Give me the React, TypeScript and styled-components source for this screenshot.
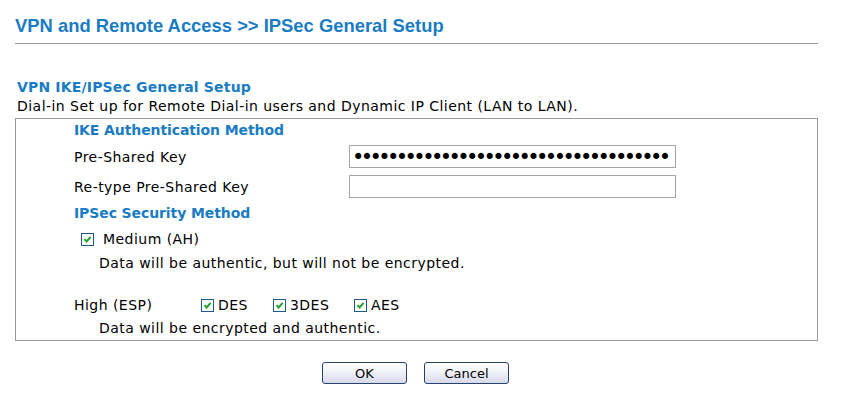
import React from "react";
import styled, { createGlobalStyle } from "styled-components";

const Global = createGlobalStyle`
  html, body { margin: 0; padding: 0; background: #ffffff; }
  body {
    font-family: "DejaVu Sans", Verdana, sans-serif;
    font-size: 14px;
    letter-spacing: 0.46px;
    color: #000;
  }
`;

const Page = styled.div`
  width: 855px;
  height: 411px;
  padding: 0 0 0 15px;
  box-sizing: border-box;
  overflow: hidden;
`;

const Title = styled.h1`
  margin: 0;
  padding-top: 16px;
  height: 27px;
  width: 803px;
  box-sizing: content-box;
  border-bottom: 1px solid #9a9a9a;
  font-family: "Liberation Sans", Arial, sans-serif;
  font-size: 18.4px;
  letter-spacing: 0;
  font-weight: bold;
  line-height: 20px;
  color: #1a7cc3;
`;

const SectionTitle = styled.div`
  margin-top: 34px;
  padding-left: 2px;
  height: 18px;
  line-height: 18px;
  font-weight: bold;
  letter-spacing: 0.17px;
  color: #1a7cc3;
`;

const Desc = styled.div`
  padding-left: 2px;
  height: 22px;
  line-height: 20px;
`;

const Box = styled.div`
  width: 743px;
  height: 221px;
  border: 1px solid #9a9a9a;
  display: flex;
  flex-direction: column;
  padding-left: 58px;
  box-sizing: content-box;
`;

const Row = styled.div<{ $h: number }>`
  height: ${(p) => p.$h}px;
  display: flex;
  align-items: center;
`;

const SubHeading = styled.div`
  font-weight: bold;
  letter-spacing: -0.1px;
  color: #1a7cc3;
`;

const Label = styled.div`
  width: 275px;
  flex: none;
`;

const TextInput = styled.input`
  width: 327px;
  height: 23px;
  box-sizing: border-box;
  border: 1px solid #a5a5a5;
  padding: 0 2px;
  margin: 0;
  font-family: "DejaVu Sans", sans-serif;
  font-size: 21px;
  letter-spacing: -3.62px;
  color: #000;
  background: #fff;
  outline: none;
`;

const Indented = styled.div<{ $pl: number }>`
  padding-left: ${(p) => p.$pl}px;
  display: flex;
  align-items: center;
`;

const CheckLabel = styled.label<{ $w?: number; $gap?: number }>`
  display: flex;
  align-items: center;
  width: ${(p) => (p.$w ? `${p.$w}px` : "auto")};
  flex: none;
  gap: ${(p) => p.$gap ?? 4}px;
`;

const CheckBoxBox = styled.span`
  width: 11px;
  height: 11px;
  border: 1px solid #1c5a8a;
  background: #fff;
  display: inline-flex;
  align-items: center;
  justify-content: center;
  flex: none;
`;

const HighLabel = styled.div`
  width: 127px;
  flex: none;
`;

const ButtonBar = styled.div`
  display: flex;
  gap: 17px;
  margin-top: 21px;
  padding-left: 307px;
`;

const Button = styled.button`
  width: 85px;
  height: 22px;
  border: 1px solid #27416d;
  border-radius: 3px;
  background: linear-gradient(#ffffff 0%, #f1f2f8 45%, #d6d9ea 100%);
  font-family: "DejaVu Sans", sans-serif;
  font-size: 13px;
  color: #000;
  padding: 0;
`;

function Check() {
  return (
    <CheckBoxBox>
      <svg width="9" height="9" viewBox="0 0 9 9">
        <path d="M1.5 4.2 L3.6 6.5 L7.6 1.8" stroke="#1fa02a" strokeWidth="2" fill="none" />
      </svg>
    </CheckBoxBox>
  );
}

export default function App() {
  return (
    <>
      <Global />
      <Page>
        <Title>VPN and Remote Access &gt;&gt; IPSec General Setup</Title>
        <SectionTitle>VPN IKE/IPSec General Setup</SectionTitle>
        <Desc>Dial-in Set up for Remote Dial-in users and Dynamic IP Client (LAN to LAN).</Desc>
        <Box>
          <Row $h={22}>
            <SubHeading>IKE Authentication Method</SubHeading>
          </Row>
          <Row $h={31}>
            <Label>Pre-Shared Key</Label>
            <TextInput type="password" readOnly defaultValue={"x".repeat(36)} />
          </Row>
          <Row $h={29}>
            <Label>Re-type Pre-Shared Key</Label>
            <TextInput type="password" readOnly defaultValue="" />
          </Row>
          <Row $h={24}>
            <SubHeading>IPSec Security Method</SubHeading>
          </Row>
          <Row $h={28}>
            <Indented $pl={7}>
              <CheckLabel $gap={9}>
                <Check />
                <span>Medium (AH)</span>
              </CheckLabel>
            </Indented>
          </Row>
          <Row $h={20}>
            <Indented $pl={25}>Data will be authentic, but will not be encrypted.</Indented>
          </Row>
          <Row $h={20} />
          <Row $h={24}>
            <HighLabel>High (ESP)</HighLabel>
            <CheckLabel $w={72}>
              <Check />
              <span>DES</span>
            </CheckLabel>
            <CheckLabel $w={81}>
              <Check />
              <span>3DES</span>
            </CheckLabel>
            <CheckLabel>
              <Check />
              <span>AES</span>
            </CheckLabel>
          </Row>
          <Row $h={21}>
            <Indented $pl={25}>Data will be encrypted and authentic.</Indented>
          </Row>
        </Box>
        <ButtonBar>
          <Button>OK</Button>
          <Button>Cancel</Button>
        </ButtonBar>
      </Page>
    </>
  );
}
